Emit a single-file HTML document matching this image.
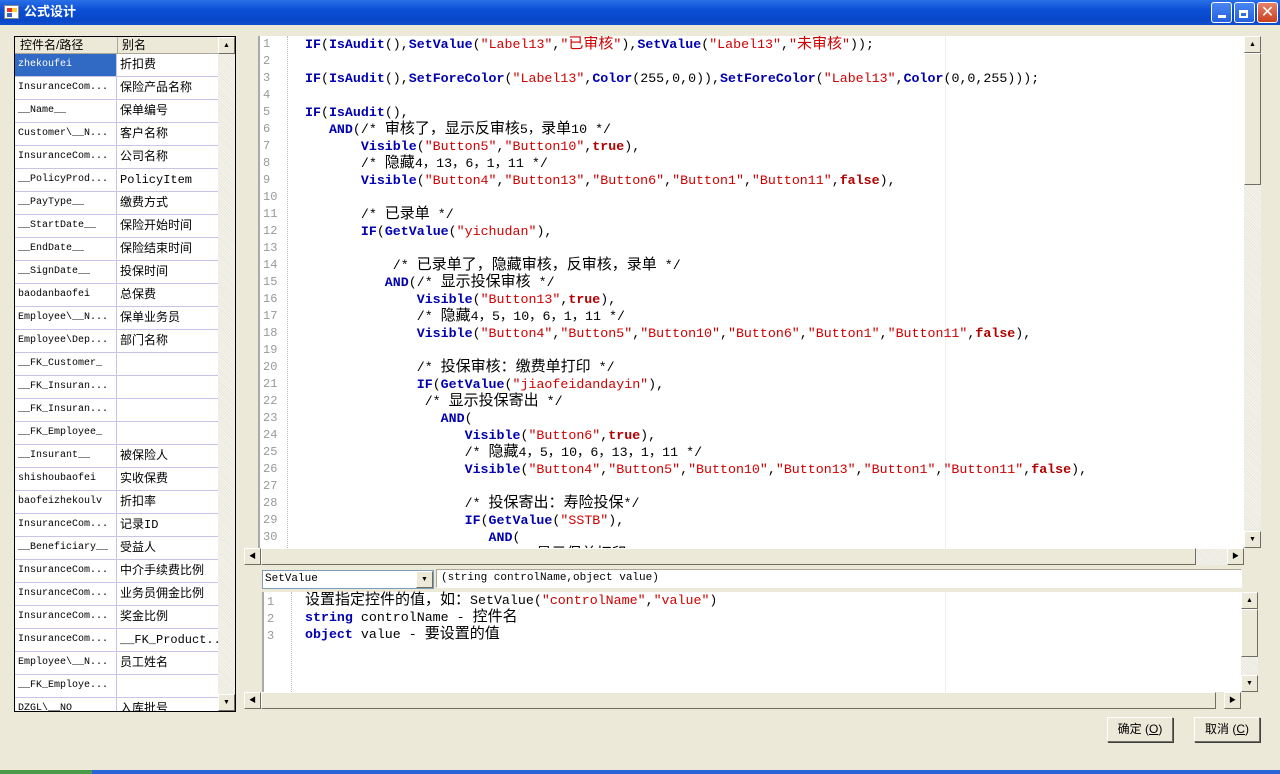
<!DOCTYPE html>
<html><head><meta charset="utf-8"><style>
*{margin:0;padding:0;box-sizing:border-box}
body{width:1280px;height:774px;background:#ECE9D8;position:relative;overflow:hidden;font-family:"Liberation Sans","Noto Sans CJK SC",sans-serif}
.title{position:absolute;left:0;top:0;width:1280px;height:25px;background:linear-gradient(#2a6fe6,#0a4fd6 40%,#0846c8 80%,#1450cc);color:#fff;font-weight:bold;font-size:13px;line-height:24px;padding-left:24px}
.wb{position:absolute;top:2px;width:21px;height:21px;border:1px solid #fff;border-radius:3px;background:linear-gradient(#4a86f0,#2260e0)}
.abs{position:absolute}
.grid{position:absolute;left:14px;top:36px;width:222px;height:676px;border:1px solid #000;background:#fff;overflow:hidden}
.hdr{position:absolute;left:0;top:0;width:203px;height:17px;background:#ECE9D8;border-bottom:1px solid #aca899;font-size:12px;line-height:17px;font-family:"Liberation Sans","Noto Sans CJK SC",sans-serif}
.row{position:absolute;left:0;width:203px;height:23px;border-bottom:1px solid #c8c4e8}
.c1,.c2{position:absolute;top:0;height:22px;line-height:22px;white-space:pre;overflow:hidden}
.c1{left:0;width:102px;padding-left:3px;border-right:1px solid #c8c4e8;font-family:"Liberation Mono",monospace;font-size:10px}
.c2{left:102px;width:101px;padding-left:3px;font-size:12px;font-family:"Liberation Mono","Noto Sans CJK SC",monospace}
.vs{position:absolute;background:#f1efe6;background-image:repeating-linear-gradient(45deg,#e8e6dc 0 1px,#f6f5ef 1px 2px)}
.btn{position:absolute;width:17px;height:17px;background:#ECE9D8;border:1px solid;border-color:#fff #716f64 #716f64 #fff;font-size:7px;line-height:15px;text-align:center;color:#000}
.code{position:absolute;left:258px;top:36px;width:986px;height:512px;background:#fff;overflow:hidden;border-left:2px solid #aaa}
.ln{position:absolute;left:3px;top:0;font-family:"Liberation Mono",monospace;font-size:12px;color:#999;line-height:17px;white-space:pre}
.gut{position:absolute;left:27px;top:0;bottom:0;border-left:1px dotted #bbb}
pre{position:absolute;left:45px;top:0;font-family:"Liberation Mono","Noto Sans CJK SC",monospace;font-size:13.3px;line-height:17px;color:#000}
pre b{color:#0000b0}
pre s{text-decoration:none;color:#d00000}
pre u{text-decoration:none;color:#b00000;font-weight:bold}
pre i{font-style:normal;font-size:15px}
.pb{position:absolute;width:66px;height:25px;background:#ECE9D8;border:1px solid;border-color:#fff #716f64 #716f64 #fff;box-shadow:1px 1px 0 #404040;font-size:12px;line-height:23px;text-align:center}
</style></head><body>
<div class="title">公式设计</div>
<div class="abs" style="left:4px;top:5px;width:15px;height:14px;background:#fff;border:1px solid #888"><div class="abs" style="left:2px;top:2px;width:5px;height:4px;background:#d33"></div><div class="abs" style="left:7px;top:2px;width:5px;height:4px;background:#fc3"></div><div class="abs" style="left:2px;top:7px;width:5px;height:4px;background:#36c"></div></div>
<div class="wb" style="left:1211px"><div class="abs" style="left:6px;top:12px;width:8px;height:3px;background:#fff"></div></div>
<div class="wb" style="left:1234px"><div class="abs" style="left:4px;top:7px;width:9px;height:8px;border:2px solid #fff;border-top-width:3px"></div></div>
<div class="wb" style="left:1257px;background:linear-gradient(#e8826a,#c9401f);color:#fff;font-size:16px;text-align:center;line-height:19px">✕</div>

<div class="grid">
<div class="hdr"><span style="padding-left:5px">控件名/路径</span><span class="abs" style="left:102px;border-left:1px solid #aca899;padding-left:4px;top:0">别名</span></div>
<div style="position:absolute;left:0;top:17px">
<div class="row" style="top:0"><div class="c1" style="background:#316ac5;color:#fff">zhekoufei</div><div class="c2">折扣费</div></div>
<div class="row" style="top:23px"><div class="c1">InsuranceCom...</div><div class="c2">保险产品名称</div></div>
<div class="row" style="top:46px"><div class="c1">__Name__</div><div class="c2">保单编号</div></div>
<div class="row" style="top:69px"><div class="c1">Customer\__N...</div><div class="c2">客户名称</div></div>
<div class="row" style="top:92px"><div class="c1">InsuranceCom...</div><div class="c2">公司名称</div></div>
<div class="row" style="top:115px"><div class="c1">__PolicyProd...</div><div class="c2">PolicyItem</div></div>
<div class="row" style="top:138px"><div class="c1">__PayType__</div><div class="c2">缴费方式</div></div>
<div class="row" style="top:161px"><div class="c1">__StartDate__</div><div class="c2">保险开始时间</div></div>
<div class="row" style="top:184px"><div class="c1">__EndDate__</div><div class="c2">保险结束时间</div></div>
<div class="row" style="top:207px"><div class="c1">__SignDate__</div><div class="c2">投保时间</div></div>
<div class="row" style="top:230px"><div class="c1">baodanbaofei</div><div class="c2">总保费</div></div>
<div class="row" style="top:253px"><div class="c1">Employee\__N...</div><div class="c2">保单业务员</div></div>
<div class="row" style="top:276px"><div class="c1">Employee\Dep...</div><div class="c2">部门名称</div></div>
<div class="row" style="top:299px"><div class="c1">__FK_Customer_</div><div class="c2"></div></div>
<div class="row" style="top:322px"><div class="c1">__FK_Insuran...</div><div class="c2"></div></div>
<div class="row" style="top:345px"><div class="c1">__FK_Insuran...</div><div class="c2"></div></div>
<div class="row" style="top:368px"><div class="c1">__FK_Employee_</div><div class="c2"></div></div>
<div class="row" style="top:391px"><div class="c1">__Insurant__</div><div class="c2">被保险人</div></div>
<div class="row" style="top:414px"><div class="c1">shishoubaofei</div><div class="c2">实收保费</div></div>
<div class="row" style="top:437px"><div class="c1">baofeizhekoulv</div><div class="c2">折扣率</div></div>
<div class="row" style="top:460px"><div class="c1">InsuranceCom...</div><div class="c2">记录ID</div></div>
<div class="row" style="top:483px"><div class="c1">__Beneficiary__</div><div class="c2">受益人</div></div>
<div class="row" style="top:506px"><div class="c1">InsuranceCom...</div><div class="c2">中介手续费比例</div></div>
<div class="row" style="top:529px"><div class="c1">InsuranceCom...</div><div class="c2">业务员佣金比例</div></div>
<div class="row" style="top:552px"><div class="c1">InsuranceCom...</div><div class="c2">奖金比例</div></div>
<div class="row" style="top:575px"><div class="c1">InsuranceCom...</div><div class="c2">__FK_Product...</div></div>
<div class="row" style="top:598px"><div class="c1">Employee\__N...</div><div class="c2">员工姓名</div></div>
<div class="row" style="top:621px"><div class="c1">__FK_Employe...</div><div class="c2"></div></div>
<div class="row" style="top:644px"><div class="c1">DZGL\__NO</div><div class="c2">入库批号</div></div>
</div>
<div class="vs" style="left:203px;top:0;width:17px;height:674px"></div>
<div class="btn" style="left:203px;top:0">▲</div>
<div class="btn" style="left:203px;top:657px">▼</div>
</div>

<div class="code">
<div class="ln">1
2
3
4
5
6
7
8
9
10
11
12
13
14
15
16
17
18
19
20
21
22
23
24
25
26
27
28
29
30
31</div>
<div class="gut"></div>
<div class="abs" style="left:685px;top:0;bottom:0;border-left:1px solid #eee"></div>
<pre><b>IF</b>(<b>IsAudit</b>(),<b>SetValue</b>(<s>"Label13"</s>,<s>"<i>已审核</i>"</s>),<b>SetValue</b>(<s>"Label13"</s>,<s>"<i>未审核</i>"</s>));

<b>IF</b>(<b>IsAudit</b>(),<b>SetForeColor</b>(<s>"Label13"</s>,<b>Color</b>(255,0,0)),<b>SetForeColor</b>(<s>"Label13"</s>,<b>Color</b>(0,0,255)));

<b>IF</b>(<b>IsAudit</b>(),
   <b>AND</b>(/* <i>审核了，显示反审核</i>5，<i>录单</i>10 */
       <b>Visible</b>(<s>"Button5"</s>,<s>"Button10"</s>,<u>true</u>),
       /* <i>隐藏</i>4，13，6，1，11 */
       <b>Visible</b>(<s>"Button4"</s>,<s>"Button13"</s>,<s>"Button6"</s>,<s>"Button1"</s>,<s>"Button11"</s>,<u>false</u>),

       /* <i>已录单</i> */
       <b>IF</b>(<b>GetValue</b>(<s>"yichudan"</s>),

           /* <i>已录单了，隐藏审核，反审核，录单</i> */
          <b>AND</b>(/* <i>显示投保审核</i> */
              <b>Visible</b>(<s>"Button13"</s>,<u>true</u>),
              /* <i>隐藏</i>4，5，10，6，1，11 */
              <b>Visible</b>(<s>"Button4"</s>,<s>"Button5"</s>,<s>"Button10"</s>,<s>"Button6"</s>,<s>"Button1"</s>,<s>"Button11"</s>,<u>false</u>),

              /* <i>投保审核：缴费单打印</i> */
              <b>IF</b>(<b>GetValue</b>(<s>"jiaofeidandayin"</s>),
               /* <i>显示投保寄出</i> */
                 <b>AND</b>(
                    <b>Visible</b>(<s>"Button6"</s>,<u>true</u>),
                    /* <i>隐藏</i>4，5，10，6，13，1，11 */
                    <b>Visible</b>(<s>"Button4"</s>,<s>"Button5"</s>,<s>"Button10"</s>,<s>"Button13"</s>,<s>"Button1"</s>,<s>"Button11"</s>,<u>false</u>),

                    /* <i>投保寄出：寿险投保</i>*/
                    <b>IF</b>(<b>GetValue</b>(<s>"SSTB"</s>),
                       <b>AND</b>(
                          /* <i>显示保单打印</i></pre>
</div>
<div class="vs" style="left:1244px;top:36px;width:17px;height:512px"></div>
<div class="btn" style="left:1244px;top:36px">▲</div>
<div class="abs" style="left:1244px;top:53px;width:17px;height:132px;background:#ECE9D8;border:1px solid;border-color:#fff #716f64 #716f64 #fff"></div>
<div class="btn" style="left:1244px;top:531px">▼</div>
<div class="abs" style="left:244px;top:548px;width:1000px;height:17px;background:#ECE9D8;border-top:1px solid #fff"></div>
<div class="btn" style="left:244px;top:548px">◀</div>
<div class="abs" style="left:261px;top:548px;width:935px;height:17px;background:#ECE9D8;border:1px solid;border-color:#fff #716f64 #716f64 #fff"></div>
<div class="btn" style="left:1227px;top:548px">▶</div>
<div class="vs" style="left:1196px;top:549px;width:31px;height:16px"></div>

<div class="abs" style="left:262px;top:570px;width:172px;height:19px;background:#fff;border:1px solid #7f9db9;font-family:'Liberation Mono',monospace;font-size:11px;line-height:17px;padding-left:2px">SetValue</div>
<div class="btn" style="left:416px;top:571px;height:17px">▼</div>
<div class="abs" style="left:436px;top:569px;width:806px;height:19px;background:#fff;border:1px solid;border-color:#aca899 #fff #fff #aca899;font-family:'Liberation Mono',monospace;font-size:11px;line-height:16px;padding-left:4px">(string controlName,object value)</div>

<div class="abs" style="left:262px;top:592px;width:980px;height:100px;background:#fff;border-left:2px solid #aaa">
<div class="ln" style="top:2px">1
2
3</div>
<div class="gut"></div>
<div class="abs" style="left:681px;top:0;bottom:0;border-left:1px solid #eee"></div>
<pre style="left:41px;top:0"><i>设置指定控件的值，如：</i>SetValue(<s>"controlName"</s>,<s>"value"</s>)
<b>string</b> controlName - <i>控件名</i>
<b>object</b> value - <i>要设置的值</i></pre>
</div>
<div class="vs" style="left:1241px;top:592px;width:17px;height:100px"></div>
<div class="btn" style="left:1241px;top:592px">▲</div>
<div class="abs" style="left:1241px;top:609px;width:17px;height:48px;background:#ECE9D8;border:1px solid;border-color:#fff #716f64 #716f64 #fff"></div>
<div class="btn" style="left:1241px;top:675px">▼</div>
<div class="abs" style="left:244px;top:692px;width:996px;height:17px;background:#ECE9D8"></div>
<div class="btn" style="left:244px;top:692px">◀</div>
<div class="abs" style="left:261px;top:692px;width:955px;height:17px;background:#ECE9D8;border:1px solid;border-color:#fff #716f64 #716f64 #fff"></div>
<div class="btn" style="left:1224px;top:692px">▶</div>

<div class="pb" style="left:1107px;top:717px">确定 (<u>O</u>)</div>
<div class="pb" style="left:1194px;top:717px">取消 (<u>C</u>)</div>
<div class="abs" style="left:0;top:770px;width:1280px;height:4px;background:#2b63d8"></div>
<div class="abs" style="left:0;top:770px;width:92px;height:4px;background:#4a9a4a"></div>
</body></html>
